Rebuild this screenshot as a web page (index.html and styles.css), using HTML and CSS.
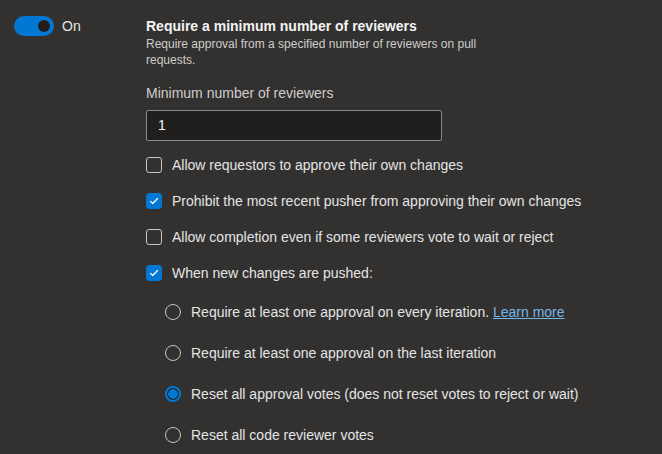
FILE: index.html
```html
<!DOCTYPE html>
<html>
<head>
<meta charset="utf-8">
<link rel="stylesheet" href="styles.css">
</head>
<body>
<div class="policy">
  <div class="toggle-col">
    <span class="toggle"><span class="knob"></span></span>
    <span class="toggle-label">On</span>
  </div>
  <div class="content">
    <div class="title">Require a minimum number of reviewers</div>
    <div class="desc">Require approval from a specified number of reviewers on pull<br>requests.</div>
    <div class="field-label">Minimum number of reviewers</div>
    <div class="input">1</div>
    <div class="checks">
      <div class="row"><span class="cb"></span><span>Allow requestors to approve their own changes</span></div>
      <div class="row"><span class="cb checked"><svg viewBox="0 0 16 16" width="16" height="16"><path d="M4.5 8.3l2.2 2.2 4.8-5" fill="none" stroke="#fff" stroke-width="1.2" stroke-linecap="round" stroke-linejoin="round"/></svg></span><span>Prohibit the most recent pusher from approving their own changes</span></div>
      <div class="row"><span class="cb"></span><span>Allow completion even if some reviewers vote to wait or reject</span></div>
      <div class="row"><span class="cb checked"><svg viewBox="0 0 16 16" width="16" height="16"><path d="M4.5 8.3l2.2 2.2 4.8-5" fill="none" stroke="#fff" stroke-width="1.2" stroke-linecap="round" stroke-linejoin="round"/></svg></span><span>When new changes are pushed:</span></div>
    </div>
    <div class="radios">
      <div class="row"><span class="rb"></span><span>Require at least one approval on every iteration. <a class="link" href="#">Learn more</a></span></div>
      <div class="row"><span class="rb"></span><span>Require at least one approval on the last iteration</span></div>
      <div class="row"><span class="rb selected"></span><span>Reset all approval votes (does not reset votes to reject or wait)</span></div>
      <div class="row"><span class="rb"></span><span>Reset all code reviewer votes</span></div>
    </div>
  </div>
</div>
</body>
</html>
```
FILE: styles.css
```css
html, body {
  margin: 0;
  padding: 0;
  background: #323130;
  width: 662px;
  height: 454px;
  overflow: hidden;
}
body {
  font-family: "Liberation Sans", Arial, sans-serif;
  color: #e4e4e4;
  font-size: 14px;
}
.policy {
  display: flex;
  padding-top: 16px;
}
.toggle-col {
  width: 146px;
  flex: none;
  padding-left: 14px;
  box-sizing: border-box;
  display: flex;
  align-items: center;
  gap: 8px;
  height: 20px;
}
.toggle {
  width: 40px;
  height: 20px;
  border-radius: 10px;
  background: #0078d4;
  display: flex;
  align-items: center;
  justify-content: flex-end;
  padding-right: 4px;
  box-sizing: border-box;
}
.knob {
  width: 12px;
  height: 12px;
  border-radius: 50%;
  background: #201f1e;
}
.toggle-label {
  line-height: 20px;
  color: #e4e4e4;
}
.content {
  display: flex;
  flex-direction: column;
}
.title {
  font-weight: bold;
  font-size: 14px;
  line-height: 20px;
  color: #f4f4f4;
}
.desc {
  font-size: 12px;
  line-height: 16px;
  color: #cfcdcb;
}
.field-label {
  margin-top: 15px;
  line-height: 20px;
  color: #cfcdcb;
}
.input {
  margin-top: 7px;
  width: 296px;
  height: 31px;
  box-sizing: border-box;
  border: 1px solid #8a8886;
  border-radius: 2px;
  background: #201f1e;
  color: #f4f4f4;
  padding-left: 11px;
  line-height: 29px;
}
.checks {
  margin-top: 14px;
  display: flex;
  flex-direction: column;
  gap: 16px;
}
.radios {
  margin-top: 19px;
  padding-left: 19px;
  display: flex;
  flex-direction: column;
  gap: 21px;
}
.row {
  display: flex;
  align-items: center;
  gap: 10px;
  height: 20px;
  line-height: 20px;
  white-space: nowrap;
}
.cb {
  width: 16px;
  height: 16px;
  box-sizing: border-box;
  border: 1px solid #c8c6c4;
  border-radius: 3px;
  flex: none;
}
.cb.checked {
  background: #0078d4;
  border-color: #0078d4;
}
.cb svg {
  display: block;
  margin: -1px;
}
.rb {
  width: 16px;
  height: 16px;
  box-sizing: border-box;
  border: 1px solid #c8c6c4;
  border-radius: 50%;
  flex: none;
}
.rb.selected {
  border: 2px solid #0078d4;
  background: radial-gradient(circle, #0078d4 0 4.5px, #201f1e 5px);
}
.link {
  color: #75b6e7;
  text-decoration: underline;
}
```
